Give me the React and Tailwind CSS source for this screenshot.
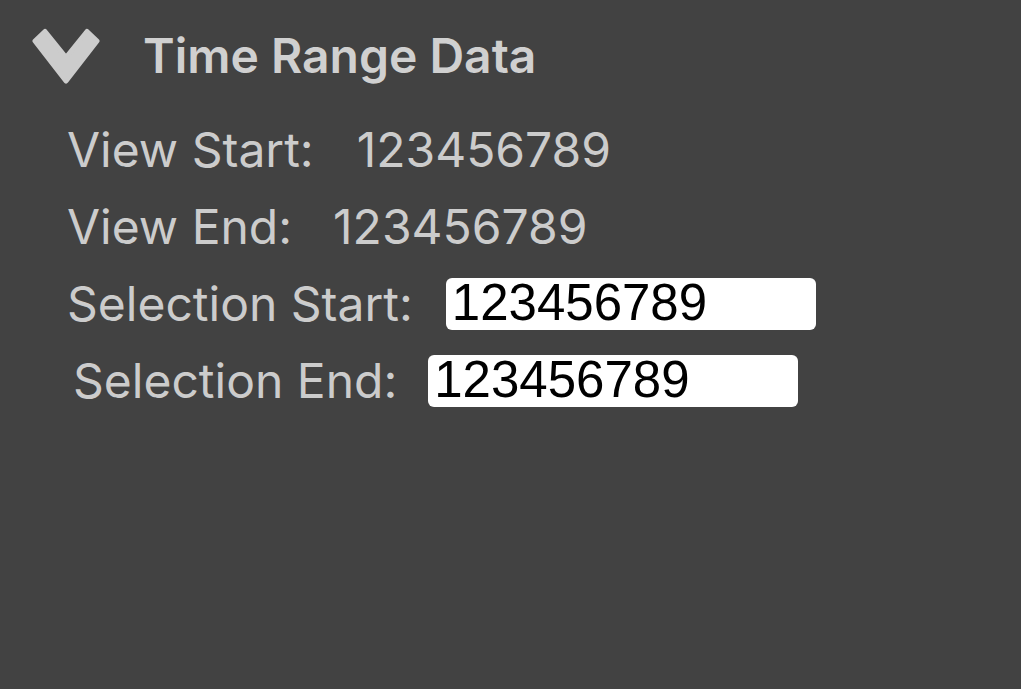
import React from 'react';

const rows = [
  { label: 'View Start:', value: '123456789', gap: 'gap-[43px]', indent: 'pl-[67px]' },
  { label: 'View End:', value: '123456789', gap: 'gap-[41px]', indent: 'pl-[67px]' },
];

const fields = [
  { label: 'Selection Start:', value: '123456789', indent: 'pl-[67px]', gap: 'gap-[33px]' },
  { label: 'Selection End:', value: '123456789', indent: 'pl-[73px]', gap: 'gap-[31px]' },
];

const Chevron = () => (
  <svg width="68" height="60" viewBox="32 24 68 60" className="shrink-0">
    <polygon
      points="35,39 45,29.5 66,55.5 87,29.5 97,39 66,79"
      fill="#cccccc"
      stroke="#cccccc"
      strokeWidth="5"
      strokeLinejoin="round"
    />
  </svg>
);

export default function App() {
  return (
    <div className="w-[1021px] h-[689px] bg-[#424242] overflow-hidden font-['Inter',sans-serif] text-[#cccccc]">
      <div className="flex flex-col pt-[17px]">
        {/* Section header */}
        <div className="h-[77px] flex items-center pl-[32px] gap-[43px]">
          <Chevron />
          <span className="text-[48px] font-semibold text-[#d0d0d0]">Time Range Data</span>
        </div>

        <div className="mt-[17px] flex flex-col">
          {rows.map((r) => (
            <div key={r.label} className={`h-[77px] flex items-center ${r.indent} ${r.gap} text-[48px]`}>
              <span>{r.label}</span>
              <span>{r.value}</span>
            </div>
          ))}
          {fields.map((f) => (
            <div key={f.label} className={`h-[77px] flex items-center ${f.indent} ${f.gap} text-[48px]`}>
              <span>{f.label}</span>
              <input
                readOnly
                value={f.value}
                className="w-[370px] h-[52px] rounded-[6px] bg-white pl-[6px] text-black text-[51px] font-['Liberation_Sans',sans-serif] outline-none"
              />
            </div>
          ))}
        </div>
      </div>
    </div>
  );
}
